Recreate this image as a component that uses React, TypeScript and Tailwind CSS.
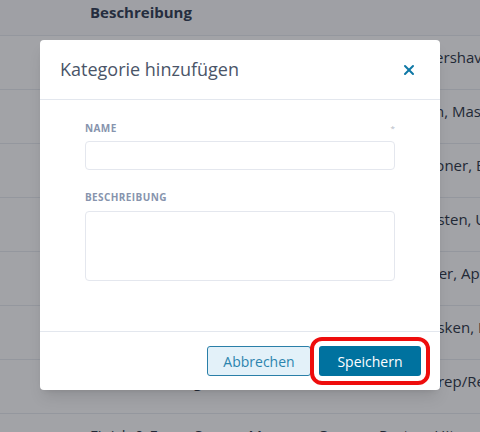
import { X } from "lucide-react";

const rows = [
  "Rasur & Bart: Rasierschaum, Klingen, Pre- und Aftershave",
  "Pflege & Kur: Haarkuren, Seren, Öle, Kurspülungen, Masken",
  "Reinigung: Shampoos, Trockenshampoos, Conditioner, Balsam",
  "Zubehör: Kämme, Scheren, Clips, Föhne, Rundbürsten, Umhänge",
  "Styling: Gele, Wachse, Haarspray, Glätteisen, Föhner, Applikatoren",
  "Intensivpflege: Ampullen, Seren, Haaröle, Haarmasken, Lotionen",
  "Farbe & Tönung: Colorationen, Entwickler, Tints, Prep/Refresh",
  "Finish & Form: Sprays, Mousses, Cremes, Pasten, Hitzeschutz",
];

function Table() {
  return (
    <div className="w-full text-[15px] text-[#2b3444]">
      <div className="flex h-[36px] pt-[2px] border-b border-[#e8ebf0] bg-[#fafbfc]">
        <div className="w-[90px] shrink-0" />
        <div className="font-bold leading-[20px] text-[#2f3b52]">Beschreibung</div>
      </div>
      {rows.map((text) => (
        <div
          key={text}
          className="flex h-[54px] border-b border-[#e8ebf0] pt-[10px] overflow-hidden"
        >
          <div className="w-[90px] shrink-0" />
          <div className="whitespace-nowrap leading-[22px] font-medium">{text}</div>
        </div>
      ))}
    </div>
  );
}

export default function App() {
  return (
    <div
      className="relative w-[480px] h-[432px] overflow-hidden bg-white"
      style={{ fontFamily: '"Open Sans", "Noto Sans", sans-serif' }}
    >
      <Table />

      <div className="absolute inset-0 bg-[rgba(22,26,36,0.4)]" />

      <div className="absolute left-[40px] top-[40px] w-[400px] bg-white rounded-[4px] shadow-lg">
        <div className="flex justify-between items-center h-[60px] pl-[20px] pr-[23px] border-b border-[#e3e7ee]">
          <h3 className="text-[18px] font-medium text-[#4a5568]">
            Kategorie hinzufügen
          </h3>
          <button className="text-[#0f78a6]">
            <X className="w-[16px] h-[16px]" strokeWidth={3} />
          </button>
        </div>

        <div className="px-[45px] pt-[22px] pb-[50px]">
          <div className="flex justify-between items-center h-[12px]">
            <label className="text-[10px] leading-[12px] font-bold tracking-[0.04em] text-[#8794ad]">
              NAME
            </label>
            <span className="text-[8px] text-[#b4bac6] leading-none">*</span>
          </div>
          <input className="mt-[7px] block w-full h-[29px] rounded-[4px] border border-[#e4e7ee] outline-none" />

          <label className="block mt-[21px] text-[10px] leading-[12px] font-bold tracking-[0.04em] text-[#8794ad]">
            BESCHREIBUNG
          </label>
          <textarea className="mt-[8px] block w-full h-[70px] rounded-[4px] border border-[#e4e7ee] outline-none resize-none" />
        </div>

        <div className="flex justify-end items-center gap-[8px] h-[59px] pr-[19px] border-t border-[#e3e7ee]">
          <button className="w-[104px] h-[30px] rounded-[3px] border border-[#2a7fa8] bg-[#e3f1f9] text-[14px] text-[#2c84ae]">
            Abbrechen
          </button>
          <button className="w-[102px] h-[30px] rounded-[3px] bg-[#00729f] text-[14px] text-white outline-4 outline-[#ee0d0d] outline-offset-[5px]">
            Speichern
          </button>
        </div>
      </div>
    </div>
  );
}
